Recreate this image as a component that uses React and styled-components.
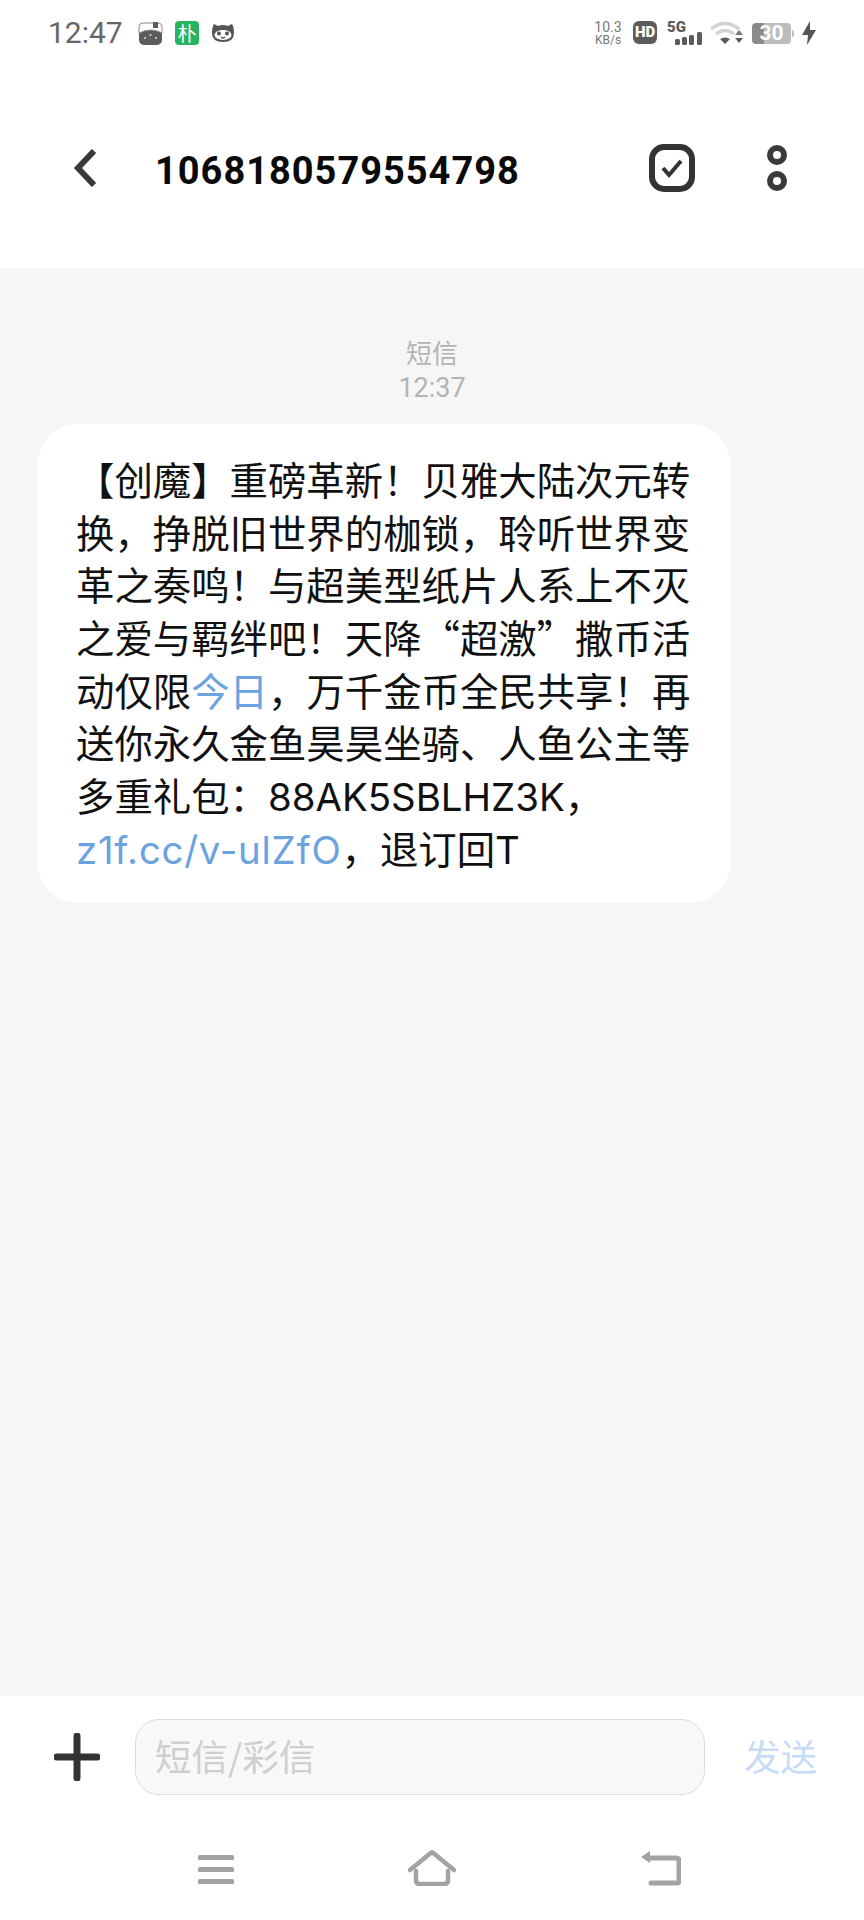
import React from 'react';
import styled, { createGlobalStyle } from 'styled-components';

const CJK = '"Noto Sans CJK SC", sans-serif';
const LATIN = 'Roboto, "Noto Sans CJK SC", sans-serif';

const Global = createGlobalStyle`
  html, body { margin: 0; padding: 0; background: #fff; }
  * { box-sizing: border-box; }
`;

const Page = styled.div`
  width: 864px;
  height: 1920px;
  display: flex;
  flex-direction: column;
  background: #fff;
  font-family: ${CJK};
`;

/* status bar */
const StatusBar = styled.div`
  height: 68px;
  flex: none;
  display: flex;
  align-items: flex-start;
  justify-content: space-between;
  padding: 21px 48px 0 48px;
`;
const StatusLeft = styled.div`
  display: flex;
  align-items: center;
  height: 24px;
`;
const StatusRight = styled.div`
  display: flex;
  align-items: flex-start;
  height: 24px;
`;
const Clock = styled.span`
  font-family: ${LATIN};
  font-size: 30px;
  line-height: 24px;
  color: #666;
  width: 90px;
`;
const NotifyBadge = styled.span`
  width: 24px;
  height: 24px;
  margin: 0 12px;
  border-radius: 4px;
  background: #27b35f;
  color: #fff;
  font-size: 19px;
  line-height: 24px;
  text-align: center;
`;
const Speed = styled.div`
  width: 36px;
  margin-right: 7px;
  display: flex;
  flex-direction: column;
  align-items: center;
  font-family: ${LATIN};
  color: #777;
`;
const SpeedNum = styled.span`
  font-size: 14px;
  line-height: 13px;
`;
const SpeedUnit = styled.span`
  font-size: 12px;
  line-height: 13px;
`;
const HdBadge = styled.span`
  width: 24px;
  height: 23px;
  border-radius: 6px;
  background: #5c5c5c;
  color: #fff;
  font-family: ${LATIN};
  font-weight: 900;
  font-size: 15px;
  line-height: 23px;
  text-align: center;
`;
const SignalWrap = styled.div`
  width: 38px;
  height: 24px;
  margin: 0 7px 0 8px;
  position: relative;
`;
const FiveG = styled.span`
  position: absolute;
  left: 2px;
  top: 0;
  font-family: ${LATIN};
  font-weight: 900;
  font-size: 15px;
  line-height: 12px;
  color: #5c5c5c;
`;
const SignalSvg = styled.svg`
  position: absolute;
  left: 2px;
  top: 0;
`;
const Battery = styled.div`
  position: relative;
  width: 42px;
  height: 21px;
  margin: 2px 8px 0 7px;
`;
const BatteryBody = styled.div`
  width: 39px;
  height: 21px;
  border-radius: 4px;
  background: linear-gradient(to right, #8a8a8a 0 32%, #bdbdbd 32% 100%);
`;
const BatteryCap = styled.div`
  position: absolute;
  right: 0;
  top: 7px;
  width: 2px;
  height: 7px;
  border-radius: 0 2px 2px 0;
  background: #bdbdbd;
`;
const BatteryText = styled.span`
  position: absolute;
  left: 0;
  top: 0;
  width: 39px;
  text-align: center;
  font-family: ${LATIN};
  font-weight: 700;
  font-size: 21px;
  line-height: 21px;
  color: #fff;
`;

/* header */
const Header = styled.header`
  height: 200px;
  flex: none;
  display: flex;
  align-items: flex-start;
  padding: 76px 0 0 73px;
`;
const BackSlot = styled.div`
  width: 82px;
  height: 48px;
  display: flex;
  align-items: center;
`;
const Title = styled.h1`
  margin: 3px 0 0;
  width: 494px;
  font-family: ${LATIN};
  font-weight: 700;
  font-size: 38px;
  line-height: 48px;
  letter-spacing: 1px;
  color: #0a0a0a;
`;
const HeaderIcon = styled.div`
  width: ${p => p.$w}px;
  margin-right: ${p => p.$gap || 0}px;
  height: 48px;
`;

/* chat */
const Chat = styled.main`
  flex: 1;
  background: #f6f6f6;
  padding: 67px 0 0 38px;
`;
const Stamp = styled.div`
  width: 788px;
  display: flex;
  flex-direction: column;
  align-items: center;
  color: #b4b4b4;
`;
const StampKind = styled.span`
  font-size: 26px;
  line-height: 34px;
`;
const StampTime = styled.span`
  margin-top: 2px;
  font-family: ${LATIN};
  font-size: 27px;
  line-height: 34px;
`;
const Bubble = styled.div`
  width: 692px;
  height: 479px;
  margin-top: 19px;
  padding: 28px 0 0 38px;
  background: #fff;
  border-radius: 40px;
  color: #111;
  font-size: 38.4px;
  line-height: 52.7px;
`;
const Line = styled.div`
  height: 52.7px;
  white-space: nowrap;
`;
const Link = styled.span`
  color: #6ba3e0;
`;
const Latin = styled.span`
  font-family: Inter, "Noto Sans CJK SC", sans-serif;
`;
const UrlText = styled(Latin)`
  letter-spacing: 0.75px;
`;

/* input row */
const Composer = styled.div`
  height: 122px;
  flex: none;
  display: flex;
  align-items: flex-start;
  padding: 23px 0 0 54px;
`;
const PlusSlot = styled.div`
  width: 81px;
  height: 76px;
  display: flex;
  align-items: center;
`;
const InputBox = styled.div`
  width: 570px;
  height: 76px;
  padding-left: 19px;
  background: #f8f8f8;
  border: 1.5px solid #dcdcdc;
  border-radius: 24px;
  color: #cfcfcf;
  font-size: 36.5px;
  line-height: 71px;
`;
const Send = styled.span`
  margin-left: 39px;
  color: #c6dcf6;
  font-size: 36.5px;
  line-height: 74px;
`;

/* nav bar */
const NavBar = styled.nav`
  height: 102px;
  flex: none;
  display: flex;
  align-items: flex-start;
  padding-top: 32px;
`;
const NavSlot = styled.div`
  margin-left: ${p => p.$left}px;
  height: 36px;
  display: flex;
`;

const AppGlyph = () => (
  <svg width="25" height="24" viewBox="0 0 25 24">
    <rect x="1" y="2" width="23" height="22" rx="5" fill="#5c5c5c" />
    <path d="M1 7 V6 Q1 2 5 2 H20 Q24 2 24 6 V12 Q13 6 1 12 Z" fill="#fff" stroke="#8a8a8a" strokeWidth="1" />
    <rect x="15" y="1" width="5" height="6" fill="#5c5c5c" />
    <circle cx="7" cy="17" r="1" fill="#ddd" />
    <circle cx="12.5" cy="14" r="1" fill="#ddd" />
    <circle cx="18" cy="17" r="1" fill="#ddd" />
  </svg>
);

const OwlGlyph = () => (
  <svg width="24" height="24" viewBox="0 0 24 24">
    <path d="M1 12 Q1 6 3 3 L7 5 Q12 3 17 5 L21 3 Q23 6 23 12 Q23 21 12 21 Q1 21 1 12 Z" fill="#555" />
    <ellipse cx="12" cy="14" rx="8.5" ry="5" fill="#fff" />
    <circle cx="8" cy="12.5" r="2" fill="#555" />
    <circle cx="16" cy="12.5" r="2" fill="#555" />
    <path d="M10 16 Q12 18 14 16" fill="none" stroke="#555" strokeWidth="1.2" />
  </svg>
);

const SignalGlyph = () => (
  <SignalSvg width="36" height="24" viewBox="0 0 36 24">
    <rect x="8" y="18" width="5" height="6" rx="1.5" fill="#5c5c5c" />
    <rect x="15" y="16" width="5" height="8" rx="1.5" fill="#5c5c5c" />
    <rect x="22" y="14" width="5" height="10" rx="1.5" fill="#5c5c5c" />
    <rect x="30" y="11" width="5" height="13" rx="1.5" fill="#5c5c5c" />
  </SignalSvg>
);

const WifiGlyph = () => (
  <svg width="35" height="24" viewBox="0 0 35 24">
    <path d="M1 8 Q15 -3 29 8" fill="none" stroke="#d2d2d2" strokeWidth="3.4" />
    <path d="M6 13 Q15 6 24 13" fill="none" stroke="#d2d2d2" strokeWidth="3.4" />
    <path d="M10 18 L15 23 L20 18 Q15 15 10 18 Z" fill="#5c5c5c" />
    <path d="M25 14 L29 9 L33 14 Z" fill="#777" />
    <path d="M25 17 L29 22 L33 17 Z" fill="#5c5c5c" />
  </svg>
);

const BoltGlyph = () => (
  <svg width="14" height="24" viewBox="0 0 14 24">
    <path d="M8 0 L0 14 H6 L5 24 L14 9 H8 Z" fill="#555" />
  </svg>
);

const BackGlyph = () => (
  <svg width="24" height="38" viewBox="0 0 24 38">
    <path d="M21 2 L5 19 L21 36" fill="none" stroke="#3a3a3a" strokeWidth="6" />
  </svg>
);

const SelectGlyph = () => (
  <svg width="46" height="48" viewBox="0 0 46 48">
    <rect x="3" y="3" width="40" height="42" rx="12" fill="none" stroke="#333" strokeWidth="6" />
    <path d="M14 24 L20 31 L32 17" fill="none" stroke="#333" strokeWidth="4" />
  </svg>
);

const DotsGlyph = () => (
  <svg width="20" height="48" viewBox="0 0 20 48">
    <circle cx="10" cy="11" r="7" fill="none" stroke="#3a3a3a" strokeWidth="6" />
    <circle cx="10" cy="37" r="7" fill="none" stroke="#3a3a3a" strokeWidth="6" />
  </svg>
);

const PlusGlyph = () => (
  <svg width="46" height="48" viewBox="0 0 46 48">
    <path d="M23 3 V45 M3 24 H43" fill="none" stroke="#333" strokeWidth="7" strokeLinecap="round" />
  </svg>
);

const MenuGlyph = () => (
  <svg width="36" height="34" viewBox="0 0 36 34">
    <rect x="0" y="5" width="36" height="5" rx="1.5" fill="#a3a3a3" />
    <rect x="0" y="17" width="36" height="5" rx="1.5" fill="#a3a3a3" />
    <rect x="0" y="29" width="36" height="5" rx="1.5" fill="#a3a3a3" />
  </svg>
);

const HouseGlyph = () => (
  <svg width="48" height="36" viewBox="0 0 48 36">
    <path d="M2 20 L24 2 L46 20" fill="none" stroke="#a3a3a3" strokeWidth="4.5" strokeLinecap="round" strokeLinejoin="round" />
    <path d="M8 21 V30 Q8 34 12 34 H36 Q40 34 40 30 V21" fill="none" stroke="#a3a3a3" strokeWidth="4.5" strokeLinecap="round" />
  </svg>
);

const ReturnGlyph = () => (
  <svg width="40" height="36" viewBox="0 0 40 36">
    <path d="M8 8 H35 Q38 8 38 11 V31 Q38 33 36 33 H10" fill="none" stroke="#a3a3a3" strokeWidth="5" strokeLinecap="round" />
    <path d="M0 7 L9 1 V13 Z" fill="#a3a3a3" />
  </svg>
);

export default function App() {
  return (
    <Page>
      <Global />
      <StatusBar>
        <StatusLeft>
          <Clock>12:47</Clock>
          <AppGlyph />
          <NotifyBadge>朴</NotifyBadge>
          <OwlGlyph />
        </StatusLeft>
        <StatusRight>
          <Speed>
            <SpeedNum>10.3</SpeedNum>
            <SpeedUnit>KB/s</SpeedUnit>
          </Speed>
          <HdBadge>HD</HdBadge>
          <SignalWrap>
            <FiveG>5G</FiveG>
            <SignalGlyph />
          </SignalWrap>
          <WifiGlyph />
          <Battery>
            <BatteryBody />
            <BatteryCap />
            <BatteryText>30</BatteryText>
          </Battery>
          <BoltGlyph />
        </StatusRight>
      </StatusBar>

      <Header>
        <BackSlot><BackGlyph /></BackSlot>
        <Title>1068180579554798</Title>
        <HeaderIcon $w={46} $gap={72}><SelectGlyph /></HeaderIcon>
        <HeaderIcon $w={20}><DotsGlyph /></HeaderIcon>
      </Header>

      <Chat>
        <Stamp>
          <StampKind>短信</StampKind>
          <StampTime>12:37</StampTime>
        </Stamp>
        <Bubble>
          <Line>【创魔】重磅革新！贝雅大陆次元转</Line>
          <Line>换，挣脱旧世界的枷锁，聆听世界变</Line>
          <Line>革之奏鸣！与超美型纸片人系上不灭</Line>
          <Line>之爱与羁绊吧！天降“超激”撒币活</Line>
          <Line>动仅限<Link>今日</Link>，万千金币全民共享！再</Line>
          <Line>送你永久金鱼昊昊坐骑、人鱼公主等</Line>
          <Line>多重礼包：<Latin>88AK5SBLHZ3K</Latin>，</Line>
          <Line><Link><UrlText>z1f.cc/v-ulZfO</UrlText></Link>，退订回<Latin>T</Latin></Line>
        </Bubble>
      </Chat>

      <Composer>
        <PlusSlot><PlusGlyph /></PlusSlot>
        <InputBox>短信/彩信</InputBox>
        <Send>发送</Send>
      </Composer>

      <NavBar>
        <NavSlot $left={198}><MenuGlyph /></NavSlot>
        <NavSlot $left={174}><HouseGlyph /></NavSlot>
        <NavSlot $left={185}><ReturnGlyph /></NavSlot>
      </NavBar>
    </Page>
  );
}
